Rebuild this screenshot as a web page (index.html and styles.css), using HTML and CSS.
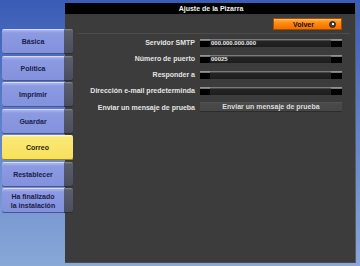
FILE: index.html
```html
<!DOCTYPE html>
<html>
<head>
    <title>Ajuste de la Pizarra</title>
    <link rel="stylesheet" href="styles.css">
</head>
<body>
    <div class="screen">
        <div class="sidebar">
            <div class="nav-btn"><span class="face">Básica</span><span class="tab"></span></div>
            <div class="nav-btn"><span class="face">Política</span><span class="tab"></span></div>
            <div class="nav-btn"><span class="face">Imprimir</span><span class="tab"></span></div>
            <div class="nav-btn"><span class="face">Guardar</span><span class="tab"></span></div>
            <div class="nav-btn active"><span class="face">Correo</span></div>
            <div class="nav-btn"><span class="face">Restablecer</span><span class="tab"></span></div>
            <div class="nav-btn"><span class="face">Ha finalizado<br>la instalación</span><span class="tab"></span></div>
        </div>

        <div class="panel">
            <div class="title-bar">Ajuste de la Pizarra</div>
            <div class="top-row">
                <div class="back-btn">
                    <span class="back-label">Volver</span>
                    <span class="back-icon"></span>
                </div>
            </div>
            <div class="divider"></div>

            <div class="form">
                <div class="label">Servidor SMTP</div>
                <div class="field"><span class="value">000.000.000.000</span></div>

                <div class="label">Número de puerto</div>
                <div class="field"><span class="value">00025</span></div>

                <div class="label">Responder a</div>
                <div class="field"><span class="value"></span></div>

                <div class="label">Dirección e-mail predeterminda</div>
                <div class="field"><span class="value"></span></div>

                <div class="label label-btn">Enviar un mensaje de prueba</div>
                <div class="test-btn">Enviar un mensaje de prueba</div>
            </div>
        </div>
    </div>
</body>
</html>
```

FILE: styles.css
```css
html, body { margin: 0; padding: 0; }
body {
    width: 360px;
    height: 266px;
    overflow: hidden;
    background: linear-gradient(to bottom, #3a5cb6 0%, #5e80c8 45%, #88a8d8 100%);
    font-family: "Liberation Sans", Arial, sans-serif;
}

.screen { display: flex; height: 266px; }

/* left navigation */
.sidebar {
    position: relative;
    z-index: 2;
    width: 63px;
    padding: 29px 0 0 2px;
    display: flex;
    flex-direction: column;
    gap: 1.5px;
}
.nav-btn {
    width: 71px;
    height: 25px;
    display: flex;
    flex-shrink: 0;
}
.nav-btn .face {
    flex: 1;
    display: flex;
    align-items: center;
    justify-content: center;
    text-align: center;
    font-size: 7px;
    font-weight: bold;
    line-height: 9px;
    color: #1c1c48;
    background: linear-gradient(to bottom, #eef0ff 0px, #a6b0ee 1.5px, #8c9ae2 4px, #8291dc 100%);
    border-radius: 2px 0 0 2px;
    box-shadow: inset 0 -1px 0 #4c5490;
}
.nav-btn .tab {
    width: 9px;
    background: linear-gradient(to bottom, #8a8c98 0px, #5a5d6c 2px, #4a4d5e 100%);
    border-radius: 0 2px 2px 0;
    box-shadow: inset 0 -1px 0 #2a2c36;
}
.nav-btn.active .face {
    background: linear-gradient(to bottom, #fffbe0 0px, #fbe978 2px, #f8e05a 100%);
    border-radius: 2px;
    color: #2a2410;
    box-shadow: inset 0 -1px 0 #9a8420;
}

/* main panel */
.panel {
    margin-top: 3px;
    width: 291px;
    height: 260px;
    background: #3c3c3c;
    border-right: 1px solid #5c5c5c;
    border-bottom: 1px solid #4c4c4c;
    box-sizing: border-box;
    display: flex;
    flex-direction: column;
}
.title-bar {
    height: 11px;
    background: #000;
    color: #f0f0f0;
    font-size: 7px;
    font-weight: bold;
    line-height: 11px;
    text-align: center;
    padding-left: 2px;
}
.top-row {
    display: flex;
    justify-content: flex-end;
    padding: 4px 13px 0 0;
}
.back-btn {
    width: 69px;
    height: 12px;
    box-sizing: border-box;
    background: linear-gradient(to bottom, #ffc880 0px, #ff9a2a 2px, #ff8000 60%, #f07000 100%);
    border: 1px solid #a24c00;
    display: flex;
    align-items: center;
}
.back-label {
    flex: 1;
    text-align: center;
    font-size: 7px;
    font-weight: bold;
    color: #1a0c00;
    padding-left: 4px;
}
.back-icon {
    width: 5px;
    height: 5px;
    margin-right: 5px;
    border-radius: 50%;
    background: radial-gradient(circle at 60% 40%, #ffffff 0 1px, #404040 1.5px);
    border: 1px solid #202020;
}
.divider {
    height: 1px;
    margin: 3px 5px 0 12px;
    background: #4c4c4c;
}

.form {
    display: grid;
    grid-template-columns: 130px 142px;
    column-gap: 5px;
    row-gap: 8px;
    margin-top: 5px;
    align-items: start;
}
.label {
    text-align: right;
    font-size: 7px;
    font-weight: bold;
    color: #e4e4e4;
    white-space: nowrap;
    line-height: 8px;
}
.label-btn { margin-top: 1px; }
.field {
    height: 8px;
    box-sizing: border-box;
    background: linear-gradient(to bottom, #8c8c8c 0px, #6a6a6a 1px, #242424 2px, #1e1e1e 100%);
    display: flex;
}
.field::before, .field::after {
    content: "";
    width: 10px;
    background: linear-gradient(to bottom, #a0a0a0 0px, #7a7a7a 1.5px, #000 2px);
}
.field::after { width: 11px; margin-left: auto; }
.field .value {
    font-size: 6px;
    line-height: 7px;
    padding: 1px 0 0 1px;
    color: #e8e8e8;
    font-weight: bold;
}
.test-btn {
    height: 10px;
    margin-top: -1px;
    background: linear-gradient(to bottom, #5a5a5a 0px, #4a4a4a 1px, #464646 100%);
    border-bottom: 1px solid #2c2c2c;
    box-sizing: border-box;
    color: #dcdcdc;
    font-size: 7px;
    font-weight: bold;
    line-height: 9px;
    text-align: center;
}
```
